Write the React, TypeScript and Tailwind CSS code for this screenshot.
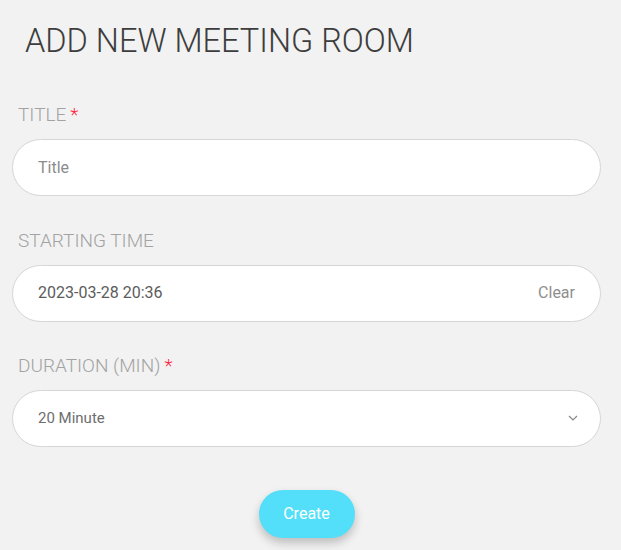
import React from 'react';

function Label({ text, required }: { text: string; required?: boolean }) {
  return (
    <label className="block pl-[6px] text-[19px] font-light leading-none text-[#a3a3a3]">
      {text}
      {required && <span className="ml-[4px] text-[#ff1f3d]">*</span>}
    </label>
  );
}

export default function App() {
  const [title, setTitle] = React.useState('');

  return (
    <div
      className="min-h-[550px] w-full bg-[#f2f2f2] text-[#444]"
      style={{ fontFamily: 'Roboto, "Liberation Sans", sans-serif' }}
    >
      <h1 className="pl-[25px] pt-[25px] text-[32.5px] font-light leading-none text-[#3d3d3d]">
        ADD NEW MEETING ROOM
      </h1>

      <form className="mt-[47px] flex flex-col pl-3 pr-5" onSubmit={(e) => e.preventDefault()}>
        <Label text="TITLE" required />
        <input
          type="text"
          placeholder="Title"
          value={title}
          onChange={(e) => setTitle(e.target.value)}
          className="mt-[15px] h-[57px] w-full rounded-full border border-[#d6d6d6] bg-white px-[25px] text-[16px] text-[#555] outline-none placeholder:text-[#8c8c8c]"
        />

        <div className="mt-[35px]">
          <Label text="STARTING TIME" />
        </div>
        <div className="mt-[15px] flex h-[57px] w-full items-center justify-between rounded-full border border-[#d6d6d6] bg-white px-[25px] text-[16px]">
          <span className="text-[#5c5c5c]">2023-03-28 20:36</span>
          <button type="button" className="text-[#8f8f8f]">
            Clear
          </button>
        </div>

        <div className="mt-[34px]">
          <Label text="DURATION (MIN)" required />
        </div>
        <div className="mt-[15px] flex h-[57px] w-full items-center justify-between rounded-full border border-[#d6d6d6] bg-white pl-[25px] pr-[22px] text-[15px]">
          <span className="text-[#6e6e6e]">20 Minute</span>
          <svg width="10" height="6" viewBox="0 0 10 6" fill="none">
            <path d="M1 1l4 4 4-4" stroke="#888" strokeWidth="1.2" />
          </svg>
        </div>

        <div className="mt-[43px] flex justify-center">
          <button
            type="submit"
            className="h-[48px] w-[96px] rounded-full bg-[#53dff9] text-[16px] text-white shadow-[0_5px_10px_rgba(0,0,0,0.22)]"
          >
            Create
          </button>
        </div>
      </form>
    </div>
  );
}
